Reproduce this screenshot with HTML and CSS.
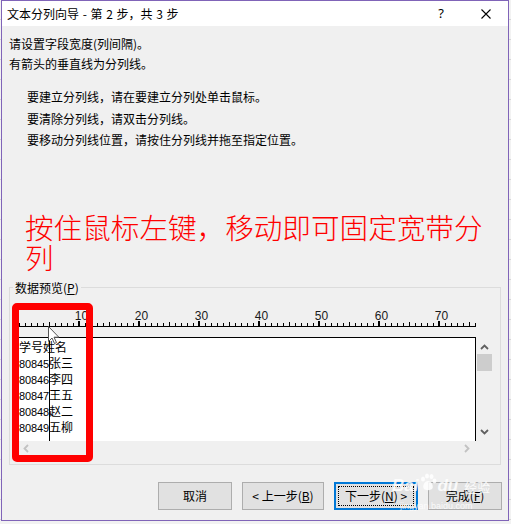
FILE: index.html
```html
<!DOCTYPE html>
<html lang="zh-CN">
<head>
<meta charset="utf-8">
<title>文本分列向导</title>
<link rel="stylesheet" href="styles.css">
</head>
<body>
<div class="window">
  <div class="titlebar">
    <span class="title">文本分列向导 - 第 2 步，共 3 步</span>
    <span class="help">?</span>
    <span class="close"><svg width="10" height="10" viewBox="0 0 10 10"><path d="M0.5 0.5 L9.5 9.5 M9.5 0.5 L0.5 9.5" stroke="#000" stroke-width="1.1" fill="none"/></svg></span>
  </div>
  <div class="content">
    <p class="line first">请设置字段宽度(列间隔)。</p>
    <p class="line">有箭头的垂直线为分列线。</p>
    <div class="instructions">
      <p>要建立分列线，请在要建立分列处单击鼠标。</p>
      <p>要清除分列线，请双击分列线。</p>
      <p>要移动分列线位置，请按住分列线并拖至指定位置。</p>
    </div>
    <p class="annotation">按住鼠标左键，移动即可固定宽带分列</p>
    <fieldset class="group">
      <legend>数据预览(<u>P</u>)</legend>
      <div class="preview">
        <svg class="ruler" width="460" height="33" viewBox="0 0 460 33">
          <defs>
            <pattern id="minor" x="2" y="0" width="6" height="33" patternUnits="userSpaceOnUse">
              <rect x="0" y="19" width="1" height="3" fill="#000"/>
            </pattern>
          </defs>
          <rect x="2" y="0" width="457" height="33" fill="url(#minor)"/>
          <rect x="2" y="22" width="457" height="1" fill="#000"/>
          <g fill="#000">
            <rect x="32" y="18" width="1" height="4"/>
            <rect x="92" y="18" width="1" height="4"/>
            <rect x="152" y="18" width="1" height="4"/>
            <rect x="212" y="18" width="1" height="4"/>
            <rect x="272" y="18" width="1" height="4"/>
            <rect x="332" y="18" width="1" height="4"/>
            <rect x="392" y="18" width="1" height="4"/>
            <rect x="452" y="18" width="1" height="4"/>
            <rect x="61" y="17" width="2" height="6"/>
            <rect x="121" y="17" width="2" height="6"/>
            <rect x="181" y="17" width="2" height="6"/>
            <rect x="241" y="17" width="2" height="6"/>
            <rect x="301" y="17" width="2" height="6"/>
            <rect x="361" y="17" width="2" height="6"/>
            <rect x="421" y="17" width="2" height="6"/>
          </g>
          <g class="ruler-num">
            <text x="64.5" y="16">10</text>
            <text x="124.5" y="16">20</text>
            <text x="184.5" y="16">30</text>
            <text x="244.5" y="16">40</text>
            <text x="304.5" y="16">50</text>
            <text x="364.5" y="16">60</text>
            <text x="424.5" y="16">70</text>
          </g>
          <rect x="32" y="22" width="1" height="11" fill="#000"/>
        </svg>
        <div class="grid">
          <div class="data">
            <div class="row">学号姓名</div>
            <div class="row"><span class="num">80845</span>张三</div>
            <div class="row"><span class="num">80846</span>李四</div>
            <div class="row"><span class="num">80847</span>王五</div>
            <div class="row"><span class="num">80848</span>赵二</div>
            <div class="row"><span class="num">80849</span>五柳</div>
            <div class="break"></div>
          </div>
          <div class="vscroll">
            <svg width="9" height="6" viewBox="0 0 9 6"><path d="M1 5 L4.5 1.5 L8 5" stroke="#606060" stroke-width="1.8" fill="none"/></svg>
            <div class="thumb"></div>
            <div class="vspace"></div>
            <svg width="9" height="6" viewBox="0 0 9 6"><path d="M1 1 L4.5 4.5 L8 1" stroke="#606060" stroke-width="1.8" fill="none"/></svg>
          </div>
          <div class="hscroll">
            <svg width="6" height="9" viewBox="0 0 6 9"><path d="M5 1 L1.5 4.5 L5 8" stroke="#c2c2c2" stroke-width="1.8" fill="none"/></svg>
            <svg width="6" height="9" viewBox="0 0 6 9"><path d="M1 1 L4.5 4.5 L1 8" stroke="#c2c2c2" stroke-width="1.8" fill="none"/></svg>
          </div>
          <div class="corner"></div>
        </div>
        <svg class="cursor" width="13" height="20" viewBox="0 0 13 20"><path d="M0.5 0.5 L0.5 15.5 L4 12 L6.5 17.5 L8.5 16.5 L6 11.2 L10.8 11.2 Z" fill="#fff" stroke="#555" stroke-width="1" stroke-linejoin="round"/></svg>
        <div class="highlight"></div>
      </div>
    </fieldset>
    <div class="buttons">
      <button class="btn w74">取消</button>
      <button class="btn w82">&lt; 上一步(<u>B</u>)</button>
      <button class="btn w84 default">下一步(<u>N</u>) &gt;</button>
      <button class="btn w74">完成(<u>F</u>)</button>
    </div>
  </div>
  <div class="watermark">
    <div class="wm-top"><span class="wm-bai">Bai</span><svg class="wm-paw" width="18" height="18" viewBox="0 0 18 18"><g fill="rgba(255,255,255,0.85)"><ellipse cx="4" cy="6" rx="2" ry="2.6"/><ellipse cx="8" cy="3" rx="2" ry="2.6"/><ellipse cx="12.5" cy="3.5" rx="2" ry="2.6"/><ellipse cx="15.5" cy="8" rx="2" ry="2.4"/><path d="M9 8 C5 8 3 14 5 16 C7 17.5 11 17.5 13 16 C15 14 13 8 9 8 Z"/></g></svg><span class="wm-du">du</span><span class="wm-jy">经验</span></div>
    <div class="wm-url">jingyan.baidu.com</div>
  </div>
</div>
</body>
</html>
```

FILE: styles.css
```css
html, body {
  margin: 0;
  padding: 0;
}

body {
  background-color: #f2f2f2;
  background-image: repeating-linear-gradient(to bottom, transparent 0, transparent 19px, #d6d6d6 19px, #d6d6d6 20px);
  font-family: "Noto Sans", "Noto Sans CJK SC", sans-serif;
  width: 511px;
  height: 524px;
  overflow: hidden;
}

.window {
  box-sizing: border-box;
  width: 508px;
  height: 521px;
  margin-left: 1px;
  border: 1px solid #8064b8;
  background: #f0f0f0;
  display: flex;
  flex-direction: column;
  position: relative;
  font-size: 12px;
  color: #000;
}

.titlebar {
  flex: none;
  height: 25px;
  background: #fff;
  display: flex;
  align-items: center;
  padding-left: 5px;
}

.title {
  flex: 1;
  font-family: "Noto Sans CJK SC", sans-serif;
  font-size: 12px;
  line-height: 25px;
  word-spacing: 1px;
}

.help {
  width: 20px;
  text-align: center;
  margin-right: 25px;
  font-family: "Noto Sans", sans-serif;
  font-size: 13px;
  line-height: 25px;
}

.close {
  width: 20px;
  height: 25px;
  margin-right: 12px;
  display: flex;
  align-items: center;
  justify-content: center;
}

.content {
  flex: 1;
  display: flex;
  flex-direction: column;
  padding: 8px 0 0 7px;
  font-family: "Noto Sans CJK SC", sans-serif;
}

.line {
  margin: 0;
  line-height: 20px;
}

.instructions {
  margin: 12px 0 0 18px;
}

.instructions p {
  margin: 0;
  line-height: 21.5px;
}

.annotation {
  margin: 61px 0 0 16px;
  width: 470px;
  font-size: 28.6px;
  line-height: 30px;
  font-weight: 300;
  color: #ff0000;
}

.group {
  box-sizing: border-box;
  width: 492px;
  margin: 8px 0 0 0;
  padding: 8px 7px 7px 7px;
  border: 1px solid #dcdcdc;
  min-inline-size: 0;
}

.group legend {
  padding: 0 2px;
  margin-left: -4px;
  line-height: 16px;
  font-size: 12px;
}

.preview {
  position: relative;
  width: 475px;
}

.ruler {
  display: block;
}

.ruler-num text {
  font-family: "Liberation Sans", sans-serif;
  font-size: 12px;
  fill: #1a1a1a;
  text-anchor: middle;
}

.grid {
  display: grid;
  grid-template-columns: 459px 16px;
  grid-template-rows: 104px 16px;
}

.data {
  position: relative;
  box-sizing: border-box;
  background: #fff;
  border: 1px solid #000;
  border-bottom: none;
  padding: 1px 0 0 1px;
  font-family: "Noto Sans CJK SC", sans-serif;
  font-size: 12px;
  overflow: hidden;
}

.row {
  line-height: 16px;
  height: 16px;
  white-space: nowrap;
}

.num {
  display: inline-block;
  width: 30px;
  font-family: "Liberation Sans", sans-serif;
  font-size: 11px;
  letter-spacing: -0.1px;
}

.break {
  position: absolute;
  left: 31px;
  top: 0;
  bottom: 0;
  width: 1px;
  background: #000;
}

.vscroll {
  display: flex;
  flex-direction: column;
  align-items: center;
  padding-top: 7px;
  padding-bottom: 6px;
  box-sizing: border-box;
}

.vscroll .thumb {
  width: 15px;
  height: 17px;
  margin-top: 4px;
  background: #cdcdcd;
}

.vspace {
  flex: 1;
}

.hscroll {
  display: flex;
  align-items: center;
  justify-content: space-between;
  padding: 0 6px 0 6px;
}

.highlight {
  position: absolute;
  left: -5px;
  top: -1px;
  width: 81px;
  height: 159px;
  box-sizing: border-box;
  border: 7px solid #ff0000;
  border-radius: 5px;
}

.cursor {
  position: absolute;
  left: 31px;
  top: 22px;
}

.buttons {
  display: flex;
  justify-content: flex-end;
  gap: 10px;
  margin-top: 17px;
  padding-right: 6px;
}

.btn {
  box-sizing: border-box;
  height: 28px;
  padding: 0;
  background: #e1e1e1;
  border: 1px solid #adadad;
  font-family: "Noto Sans CJK SC", sans-serif;
  font-size: 12px;
  color: #000;
  position: relative;
}

.w74 { width: 74px; }
.w82 { width: 82px; }
.w84 { width: 84px; }

.btn.default {
  border: 2px solid #0078d7;
}

.btn.default::after {
  content: "";
  position: absolute;
  left: 2px;
  top: 2px;
  right: 2px;
  bottom: 2px;
  border: 1px dotted #000;
}

.watermark {
  position: absolute;
  left: 390px;
  top: 472px;
  color: rgba(255, 255, 255, 0.85);
  font-family: "Liberation Sans", sans-serif;
  pointer-events: none;
}

.wm-top {
  display: flex;
  align-items: flex-end;
  height: 22px;
}

.wm-bai, .wm-du {
  font-size: 17px;
  font-weight: bold;
  font-style: italic;
  line-height: 18px;
}

.wm-paw {
  margin: 0 0 4px 1px;
}

.wm-jy {
  margin-left: 6px;
  font-family: "Noto Sans CJK SC", sans-serif;
  font-size: 13px;
  line-height: 16px;
}

.wm-url {
  margin: 6px 0 0 8px;
  font-size: 9px;
  line-height: 10px;
}
```
